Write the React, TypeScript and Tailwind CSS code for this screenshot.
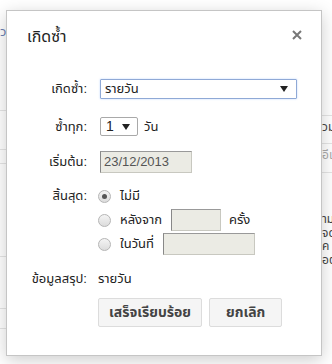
import React from 'react';

const font = { fontFamily: '"Liberation Sans", "Noto Sans Thai", Tahoma, Arial, sans-serif' };

function Radio({ checked }: { checked?: boolean }) {
  return (
    <span className="flex h-[13px] w-[13px] items-center justify-center rounded-full border border-[#b5b5b5] bg-gradient-to-b from-[#f4f4f4] to-[#dcdcdc]">
      {checked && <span className="h-[5px] w-[5px] rounded-full bg-[#555]" />}
    </span>
  );
}

function Arrow() {
  return (
    <svg width="8" height="6" viewBox="0 0 8 6" className="shrink-0">
      <path d="M0 0h8L4 6z" fill="#222" />
    </svg>
  );
}

export default function App() {
  return (
    <div className="relative h-[364px] w-[332px] overflow-hidden bg-white text-[13px] text-[#222]" style={font}>
      {/* page behind the dialog */}
      <div className="absolute left-0 top-[22px] text-[13px] text-[#6b7fb3]">ว</div>
      <div className="absolute left-0 top-[110px] h-px w-[8px] bg-[#e5e5e5]" />
      <div className="absolute left-0 top-[149px] h-px w-[8px] bg-[#e5e5e5]" />
      <div className="absolute left-0 top-[163px] h-px w-[8px] bg-[#e5e5e5]" />
      <div className="absolute left-0 top-[256px] h-px w-[8px] bg-[#e5e5e5]" />
      <div className="absolute left-0 top-[308px] h-px w-[8px] bg-[#e5e5e5]" />
      <div className="absolute left-0 top-[328px] h-px w-[8px] bg-[#e5e5e5]" />
      <div className="absolute right-0 top-[115px] h-px w-[12px] bg-[#e5e5e5]" />
      <div className="absolute right-0 top-[143px] h-px w-[12px] bg-[#e5e5e5]" />
      <div className="absolute right-0 top-[172px] h-px w-[12px] bg-[#e5e5e5]" />
      <div className="absolute left-[322px] top-[120px] w-[10px] overflow-hidden whitespace-nowrap text-[12px] leading-[14px] text-[#444]">วม</div>
      <div className="absolute left-[322px] top-[148px] w-[10px] overflow-hidden whitespace-nowrap text-[12px] leading-[14px] text-[#aaa]">อีเ</div>
      <div className="absolute left-[322px] top-[213px] flex w-[10px] flex-col overflow-hidden whitespace-nowrap text-[12px] leading-[13.5px] text-[#444]">
        <span>าม</span>
        <span>จด</span>
        <span>ค</span>
        <span>อต</span>
      </div>

      {/* dialog */}
      <div className="absolute left-[6px] top-[10px] h-[346px] w-[316px] border border-[#c5c5c5] bg-white shadow-[0_4px_16px_rgba(0,0,0,0.2)]">
        <div className="flex items-start justify-between pl-[20px] pr-[19px] pt-[16px]">
          <div className="text-[16px] leading-[20px] text-[#222]">เกิดซ้ำ</div>
          <svg width="10" height="10" viewBox="0 0 10 10" className="mt-[3px]">
            <path d="M1 1L9 9M9 1L1 9" stroke="#777" strokeWidth="2" />
          </svg>
        </div>

        <div className="mt-[32px] grid grid-cols-[80px_1fr] gap-x-[13px]">
          <div className="flex h-[20px] items-center justify-end">เกิดซ้ำ:</div>
          <div className="flex h-[20px] w-[197px] items-center justify-between rounded-[1px] border border-[#8fa9d6] px-[4px] pr-[8px] shadow-[0_0_2px_rgba(77,144,254,0.4)]">
            <span>รายวัน</span>
            <Arrow />
          </div>

          <div className="mt-[18px] flex h-[19px] items-center justify-end">ซ้ำทุก:</div>
          <div className="mt-[18px] flex h-[19px] items-center gap-[6px]">
            <div className="flex h-[19px] w-[38px] items-center justify-between rounded-[2px] border border-[#a9a9a9] pl-[5px] pr-[7px]">
              <span className="text-[14px]">1</span>
              <Arrow />
            </div>
            <span>วัน</span>
          </div>

          <div className="mt-[15px] flex h-[22px] items-center justify-end">เริ่มต้น:</div>
          <div className="mt-[15px] flex h-[22px] w-[92px] items-center border border-[#c8c8c0] border-l-[#888] border-t-[#999] bg-[#ebebe4] px-[3px] text-[#555]">
            23/12/2013
          </div>

          <div className="mt-[12px] flex h-[22px] items-center justify-end">สิ้นสุด:</div>
          <div className="mt-[12px] -ml-[2px] flex flex-col gap-[2px]">
            <div className="flex h-[22px] items-center gap-[9px]">
              <Radio checked />
              <span>ไม่มี</span>
            </div>
            <div className="flex h-[22px] items-center gap-[9px]">
              <Radio />
              <span>หลังจาก</span>
              <div className="h-[22px] w-[50px] border border-[#c8c8c0] border-l-[#888] border-t-[#999] bg-[#ebebe4]" />
              <span className="-ml-[1px]">ครั้ง</span>
            </div>
            <div className="flex h-[22px] items-center gap-[9px]">
              <Radio />
              <span>ในวันที่</span>
              <div className="h-[22px] w-[92px] border border-[#c8c8c0] border-l-[#888] border-t-[#999] bg-[#ebebe4]" />
            </div>
          </div>

          <div className="mt-[14px] flex h-[20px] items-center justify-end">ข้อมูลสรุป:</div>
          <div className="mt-[14px] -ml-[2px] flex h-[20px] items-center">รายวัน</div>

          <div />
          <div className="mt-[9px] -ml-[2px] flex gap-[7px]">
            <button className="h-[29px] rounded-[2px] border border-[#dcdcdc] bg-[#f5f5f5] px-[10px] text-[14px] font-bold text-[#444]">
              เสร็จเรียบร้อย
            </button>
            <button className="h-[29px] rounded-[2px] border border-[#dcdcdc] bg-[#f5f5f5] px-[16px] text-[14px] font-bold text-[#444]">
              ยกเลิก
            </button>
          </div>
        </div>
      </div>
    </div>
  );
}
